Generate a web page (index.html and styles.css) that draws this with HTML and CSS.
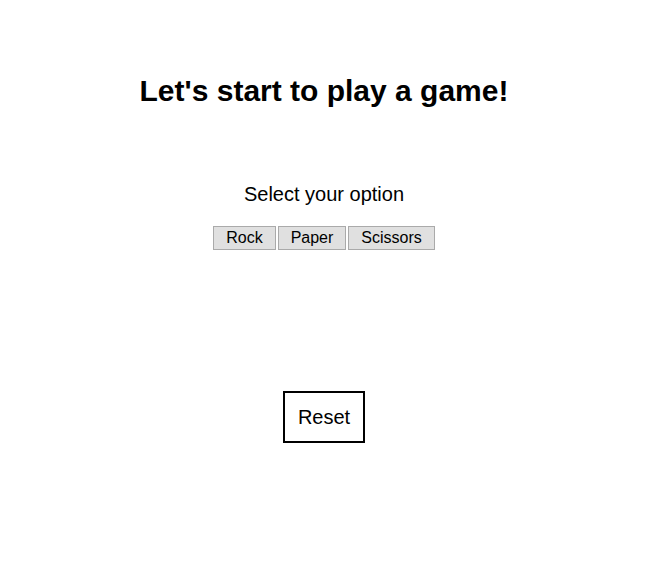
FILE: index.html
```html
<!DOCTYPE html>
<html>
<head>
<meta charset="utf-8">
<link rel="stylesheet" href="styles.css">
</head>
<body>
<div class="page">
  <h1 class="title">Let's start to play a game!</h1>
  <p class="prompt">Select your option</p>
  <div class="options">
    <button class="opt">Rock</button>
    <button class="opt">Paper</button>
    <button class="opt">Scissors</button>
  </div>
  <button class="reset">Reset</button>
</div>
</body>
</html>
```
FILE: styles.css
```css
html, body { margin: 0; padding: 0; background: #fff; }
.page {
  font-family: "Liberation Sans", Arial, sans-serif;
  display: flex;
  flex-direction: column;
  align-items: center;
  color: #000;
}
.title {
  font-size: 30px;
  font-weight: bold;
  margin: 73px 0 0 0;
  line-height: 35px;
}
.prompt {
  font-size: 20px;
  margin: 74px 0 0 0;
  line-height: 24px;
}
.options {
  display: flex;
  gap: 2px;
  margin-top: 20px;
}
.opt {
  font-family: "Liberation Sans", Arial, sans-serif;
  font-size: 16px;
  background: #e0e0e0;
  border: 1px solid #aaa;
  height: 24px;
  padding: 0 12px;
  line-height: 20px;
  color: #000;
}
.reset {
  font-family: "Liberation Sans", Arial, sans-serif;
  font-size: 20px;
  background: #fff;
  border: 2px solid #000;
  width: 82px;
  height: 52px;
  margin-top: 141px;
  color: #000;
  padding: 0;
}
```
